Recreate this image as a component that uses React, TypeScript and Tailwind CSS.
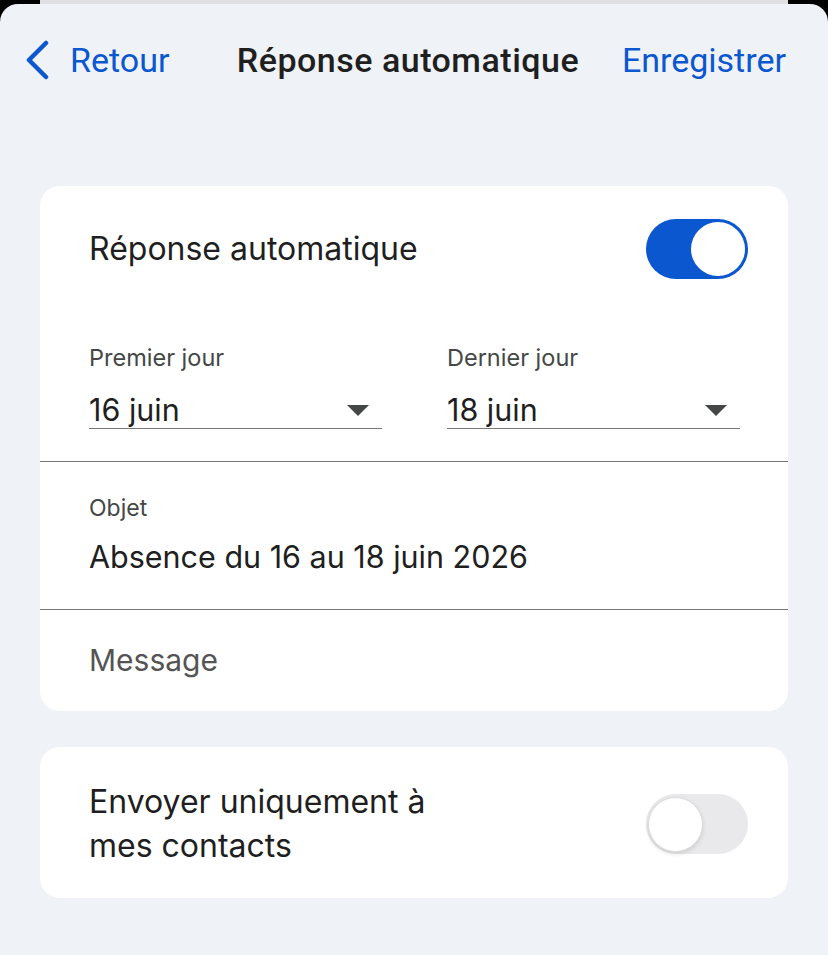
import { useState } from "react";

function Chevron() {
  return (
    <svg width="24" height="40" viewBox="0 0 24 40" fill="none">
      <path
        d="M20 3 L3 20 L20 37"
        stroke="#0b57d0"
        strokeWidth="4.5"
        strokeLinecap="round"
        strokeLinejoin="round"
      />
    </svg>
  );
}

function Caret() {
  return (
    <svg width="22" height="11" viewBox="0 0 22 11">
      <path d="M0 0 H22 L11 11 Z" fill="#444746" />
    </svg>
  );
}

type ToggleProps = {
  on: boolean;
  onChange: (value: boolean) => void;
};

function Toggle({ on, onChange }: ToggleProps) {
  return (
    <button
      type="button"
      onClick={() => onChange(!on)}
      className={
        on
          ? "flex h-[60px] w-[102px] shrink-0 items-center justify-end rounded-full bg-[#0b57d0] px-[3px]"
          : "flex h-[60px] w-[102px] shrink-0 items-center justify-start rounded-full bg-[#e9e9eb] px-[2px]"
      }
    >
      <span
        className={
          on
            ? "h-[54px] w-[54px] rounded-full bg-white"
            : "h-[55px] w-[55px] rounded-full border border-[#dcdcdc] bg-white shadow-[0_2px_4px_rgba(0,0,0,0.12)]"
        }
      />
    </button>
  );
}

function DateField({ label, value }: { label: string; value: string }) {
  return (
    <div>
      <p className="text-[23.5px] leading-[28px] text-[#444746]">{label}</p>
      <div className="mt-[20px] flex h-[37px] items-center justify-between border-b border-[#747775] pr-[13px]">
        <span className="text-[30.5px] leading-[36px] text-[#1f1f1f]">{value}</span>
        <Caret />
      </div>
    </div>
  );
}

export default function App() {
  const [autoReply, setAutoReply] = useState(true);
  const [contactsOnly, setContactsOnly] = useState(false);

  return (
    <div
      className="min-h-[955px] bg-black"
      style={{ fontFamily: "Inter, 'Noto Sans', sans-serif" }}
    >
      <div className="mx-[40px] h-[4px] bg-[#dfe0e4]" />

      <div className="min-h-[951px] rounded-t-[18px] bg-[#eff2f7]">

        {/* nav bar */}
        <div
          className="grid h-[112px] grid-cols-[1fr_auto_1fr] items-center pl-[26px] pr-[42px]"
          style={{ fontFamily: "Roboto, sans-serif" }}
        >
          <button type="button" className="flex items-center gap-[20px] text-[34px] text-[#0b57d0]">
            <Chevron />
            <span>Retour</span>
          </button>
          <h1 className="pl-[4px] text-[34px] font-medium tracking-[0.5px] text-[#1f1f1f]">
            Réponse automatique
          </h1>
          <button type="button" className="justify-self-end text-[34px] text-[#0b57d0]">
            Enregistrer
          </button>
        </div>

        <div className="mt-[70px] px-[40px]">

          <div className="rounded-[20px] bg-white">

            <div className="flex h-[93px] items-end pl-[49px] pr-[40px]">
              <div className="flex h-[60px] w-full items-center justify-between">
                <span className="text-[32px] text-[#1f1f1f]">Réponse automatique</span>
                <Toggle on={autoReply} onChange={setAutoReply} />
              </div>
            </div>

            <div className="grid grid-cols-2 gap-[65px] pl-[49px] pr-[48px] pt-[65px] pb-[32px]">
              <DateField label="Premier jour" value="16 juin" />
              <DateField label="Dernier jour" value="18 juin" />
            </div>

            <div className="border-t border-[#747775] pl-[49px] pt-[32px] pb-[34px]">
              <p className="text-[23px] leading-[28px] text-[#444746]">Objet</p>
              <p className="mt-[17px] text-[30.5px] leading-[36px] text-[#1f1f1f]">
                Absence du 16 au 18 juin 2026
              </p>
            </div>

            <div className="border-t border-[#747775] pl-[49px] pt-[32px] pb-[33px]">
              <p className="text-[30px] leading-[36px] text-[#545454]">Message</p>
            </div>

          </div>

          <div className="mt-[36px] flex items-center justify-between rounded-[20px] bg-white pl-[49px] pr-[40px] pt-[33px] pb-[30px]">
            <p className="text-[32px] leading-[44px] text-[#1f1f1f]">
              Envoyer uniquement à
              <br />
              mes contacts
            </p>
            <Toggle on={contactsOnly} onChange={setContactsOnly} />
          </div>

        </div>
      </div>
    </div>
  );
}
